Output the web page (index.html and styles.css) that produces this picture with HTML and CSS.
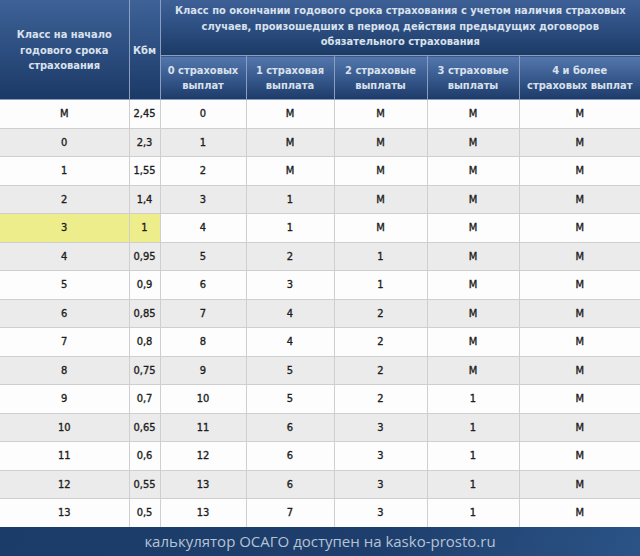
FILE: index.html
```html
<!DOCTYPE html>
<html lang="ru">
<head>
<meta charset="utf-8">
<link rel="stylesheet" href="styles.css">
</head>
<body>
<div class="page">
<table class="kbm">
  <colgroup>
    <col class="c1"><col class="c2"><col class="c3"><col class="c4"><col class="c5"><col class="c6"><col class="c7">
  </colgroup>
  <thead>
    <tr class="h1">
      <th rowspan="2" class="tall">Класс на начало<br>годового срока<br>страхования</th>
      <th rowspan="2" class="tall">Кбм</th>
      <th colspan="5" class="top">Класс по окончании годового срока страхования с учетом наличия страховых<br>случаев, произошедших в период действия предыдущих договоров<br>обязательного страхования</th>
    </tr>
    <tr class="h2">
      <th>0 страховых<br>выплат</th>
      <th>1 страховая<br>выплата</th>
      <th>2 страховые<br>выплаты</th>
      <th>3 страховые<br>выплаты</th>
      <th>4 и более<br>страховых выплат</th>
    </tr>
  </thead>
  <tbody>
    <tr><td>М</td><td>2,45</td><td>0</td><td>М</td><td>М</td><td>М</td><td>М</td></tr>
    <tr><td>0</td><td>2,3</td><td>1</td><td>М</td><td>М</td><td>М</td><td>М</td></tr>
    <tr><td>1</td><td>1,55</td><td>2</td><td>М</td><td>М</td><td>М</td><td>М</td></tr>
    <tr><td>2</td><td>1,4</td><td>3</td><td>1</td><td>М</td><td>М</td><td>М</td></tr>
    <tr><td class="hl">3</td><td class="hl">1</td><td>4</td><td>1</td><td>М</td><td>М</td><td>М</td></tr>
    <tr><td>4</td><td>0,95</td><td>5</td><td>2</td><td>1</td><td>М</td><td>М</td></tr>
    <tr><td>5</td><td>0,9</td><td>6</td><td>3</td><td>1</td><td>М</td><td>М</td></tr>
    <tr><td>6</td><td>0,85</td><td>7</td><td>4</td><td>2</td><td>М</td><td>М</td></tr>
    <tr><td>7</td><td>0,8</td><td>8</td><td>4</td><td>2</td><td>М</td><td>М</td></tr>
    <tr><td>8</td><td>0,75</td><td>9</td><td>5</td><td>2</td><td>М</td><td>М</td></tr>
    <tr><td>9</td><td>0,7</td><td>10</td><td>5</td><td>2</td><td>1</td><td>М</td></tr>
    <tr><td>10</td><td>0,65</td><td>11</td><td>6</td><td>3</td><td>1</td><td>М</td></tr>
    <tr><td>11</td><td>0,6</td><td>12</td><td>6</td><td>3</td><td>1</td><td>М</td></tr>
    <tr><td>12</td><td>0,55</td><td>13</td><td>6</td><td>3</td><td>1</td><td>М</td></tr>
    <tr><td>13</td><td>0,5</td><td>13</td><td>7</td><td>3</td><td>1</td><td>М</td></tr>
  </tbody>
</table>
<div class="footer">калькулятор ОСАГО доступен на kasko-prosto.ru</div>
</div>
</body>
</html>
```
FILE: styles.css
```css
html, body {
  margin: 0;
  padding: 0;
  background: #ffffff;
}
.page {
  width: 640px;
  height: 556px;
  overflow: hidden;
}
.kbm {
  width: 640px;
  border-collapse: collapse;
  table-layout: fixed;
  font-family: "DejaVu Sans Condensed", "DejaVu Sans", sans-serif;
}
.c1 { width: 129px; }
.c2 { width: 31px; }
.c3 { width: 86px; }
.c4 { width: 88px; }
.c5 { width: 93px; }
.c6 { width: 92px; }
.c7 { width: 121px; }

.kbm th {
  color: #d9e1ec;
  font-weight: bold;
  font-size: 11px;
  line-height: 15.5px;
  text-align: center;
  padding: 0;
  border: 1px solid #8a9fbf;
}
.kbm th.tall {
  background: linear-gradient(to bottom, #3e6297 0%, #2c4e80 50%, #1c3965 100%);
  vertical-align: middle;
  border-top: none;
  padding-top: 2px;
}
.kbm th.tall:first-child { border-left: none; }
.kbm th.top {
  background: linear-gradient(to bottom, #3d6096 0%, #2b4c7e 55%, #1c3a66 100%);
  height: 53px;
  border-top: none;
  border-right: none;
  vertical-align: middle;
  padding-bottom: 2px;
}
.kbm .h2 th {
  background: linear-gradient(to bottom, #5477ad 0%, #3a5c90 45%, #1d3b69 100%);
  height: 42px;
  vertical-align: middle;
  padding-top: 1px;
}
.kbm .h2 th:last-child { border-right: none; }

.kbm td {
  height: 27.5px;
  padding: 0;
  text-align: center;
  vertical-align: middle;
  font-size: 11px;
  font-weight: normal;
  -webkit-text-stroke: 0.35px #1e1e1e;
  color: #1e1e1e;
  border: 1px solid #cfcfcf;
}
.kbm td:first-child { border-left: none; }
.kbm td:last-child { border-right: none; }
.kbm tbody tr:nth-child(odd) td { background: #fdfdfd; }
.kbm tbody tr:nth-child(even) td { background: #ebebeb; }
.kbm tbody tr td.hl { background: #eded8b; }
.kbm tbody tr:last-child td { border-bottom: none; }

.footer {
  height: 30px;
  background: linear-gradient(100deg, #1b3b68 0%, #1e3f6d 60%, #2b5386 100%);
  color: #b7c3d4;
  font-family: "Open Sans", "Noto Sans", sans-serif;
  font-size: 15px;
  line-height: 28px;
  text-align: center;
}
```
